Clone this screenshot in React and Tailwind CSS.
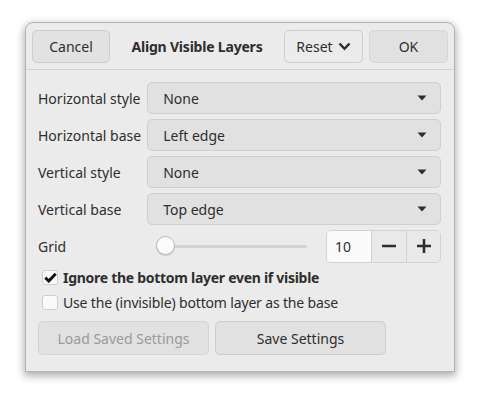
import React from "react";

function Arrow() {
  return (
    <svg width="10" height="6" viewBox="0 0 10 6" className="shrink-0">
      <path d="M0.5 0.5 L9.5 0.5 L5 5.5 Z" fill="#2e2e2e" />
    </svg>
  );
}

function Dropdown({ value }) {
  return (
    <div className="h-[32px] flex items-center justify-between pl-[15px] pr-[13px] bg-[#e1e1e1] border border-[#cfcfcf] rounded-[5px] text-[#2e2e2e]">
      <span>{value}</span>
      <Arrow />
    </div>
  );
}

function Label({ children }) {
  return <div className="flex items-center h-[32px] text-[#2e2e2e] whitespace-nowrap">{children}</div>;
}

export default function App() {
  return (
    <div
      className="w-[480px] h-[400px] bg-white pt-[22px] pl-[25px]"
      style={{ fontFamily: '"Noto Sans", sans-serif' }}
    >
      <div className="w-[430px] h-[350px] bg-[#ebebeb] border border-[#b5b5b5] rounded-t-[8px] shadow-[0_3px_9px_1px_rgba(0,0,0,0.33)] flex flex-col text-[14px] leading-[19px]">
        {/* header */}
        <div className="h-[47px] flex items-center px-[6px] border-b border-[#d2d2d2] shrink-0">
          <div className="w-[78px] h-[33px] flex items-center justify-center bg-[#e2e2e2] border border-[#cdcdcd] rounded-[5px] text-[#2e2e2e]">
            Cancel
          </div>
          <div className="flex-1 text-center font-bold text-[#2e2e2e] tracking-[-0.2px]">Align Visible Layers</div>
          <div className="w-[79px] h-[33px] flex items-center justify-center gap-[5px] bg-[#ebebeb] border border-[#cdcdcd] rounded-[5px] text-[#2e2e2e]">
            <span>Reset</span>
            <svg width="13" height="9" viewBox="0 0 13 9">
              <path d="M1.5 1.5 L6.5 6.8 L11.5 1.5" stroke="#2e2e2e" strokeWidth="2.4" fill="none" />
            </svg>
          </div>
          <div className="ml-[6px] w-[79px] h-[33px] flex items-center justify-center bg-[#e1e1e1] border border-[#d6d6d6] rounded-[5px] text-[#2e2e2e]">
            OK
          </div>
        </div>

        {/* body */}
        <div className="flex flex-col pl-[12px] pr-[13px] pt-[12px]">
          <div className="grid grid-cols-[auto_1fr] gap-x-[6px] gap-y-[5px]">
            <Label>Horizontal style</Label>
            <Dropdown value="None" />
            <Label>Horizontal base</Label>
            <Dropdown value="Left edge" />
            <Label>Vertical style</Label>
            <Dropdown value="None" />
            <Label>Vertical base</Label>
            <Dropdown value="Top edge" />
            <Label>Grid</Label>
            <div className="flex items-center h-[32px]">
              <div className="flex-1 relative h-[20px] flex items-center pl-[10px] pr-[19px]">
                <div className="flex-1 h-[3px] bg-[#d3d3d3] rounded-full ml-[9px]" />
                <div className="absolute left-[9px] top-[0px] w-[19px] h-[19px] rounded-full bg-[#fbfbfb] border border-[#bcbcbc] shadow-[0_1px_1px_rgba(0,0,0,0.15)]" />
              </div>
              <div className="w-[115px] h-[33px] flex border border-[#d2d2d2] rounded-[5px] overflow-hidden">
                <div className="w-[44px] flex items-center pl-[8px] bg-[#fafafa] text-[#2e2e2e]">10</div>
                <div className="w-[35px] flex items-center justify-center bg-[#e9e9e9] border-l border-[#d2d2d2]">
                  <svg width="14" height="14" viewBox="0 0 14 14">
                    <path d="M0 7 H14" stroke="#2e2e2e" strokeWidth="2.6" />
                  </svg>
                </div>
                <div className="flex-1 flex items-center justify-center bg-[#e9e9e9] border-l border-[#d2d2d2]">
                  <svg width="14" height="14" viewBox="0 0 14 14">
                    <path d="M0 7 H14 M7 0 V14" stroke="#2e2e2e" strokeWidth="2.6" />
                  </svg>
                </div>
              </div>
            </div>
          </div>

          <div className="flex items-center mt-[6px] ml-[4px] h-[19px]">
            <div className="w-[16px] h-[15px] rounded-[3px] bg-[#fafafa] border border-[#cfcfcf] flex items-center justify-center">
              <svg width="13" height="11" viewBox="0 0 13 11">
                <path d="M1.3 5.6 L4.8 9 L11.7 1.8" stroke="#111111" strokeWidth="3" fill="none" />
              </svg>
            </div>
            <span className="ml-[5px] font-bold text-[#2e2e2e] tracking-[-0.28px]">Ignore the bottom layer even if visible</span>
          </div>
          <div className="flex items-center mt-[6px] ml-[4px] h-[19px]">
            <div className="w-[16px] h-[15px] rounded-[3px] bg-[#fafafa] border border-[#cfcfcf]" />
            <span className="ml-[5px] text-[#2e2e2e] tracking-[-0.16px]">Use the (invisible) bottom layer as the base</span>
          </div>

          <div className="flex gap-[6px] mt-[9px]">
            <div className="w-[171px] h-[34px] flex items-center justify-center bg-[#e1e1e1] border border-[#d4d4d4] rounded-[5px] text-[#9a9a9a]">
              Load Saved Settings
            </div>
            <div className="w-[171px] h-[34px] flex items-center justify-center bg-[#e1e1e1] border border-[#cdcdcd] rounded-[5px] text-[#2e2e2e]">
              Save Settings
            </div>
          </div>
        </div>
      </div>
    </div>
  );
}
